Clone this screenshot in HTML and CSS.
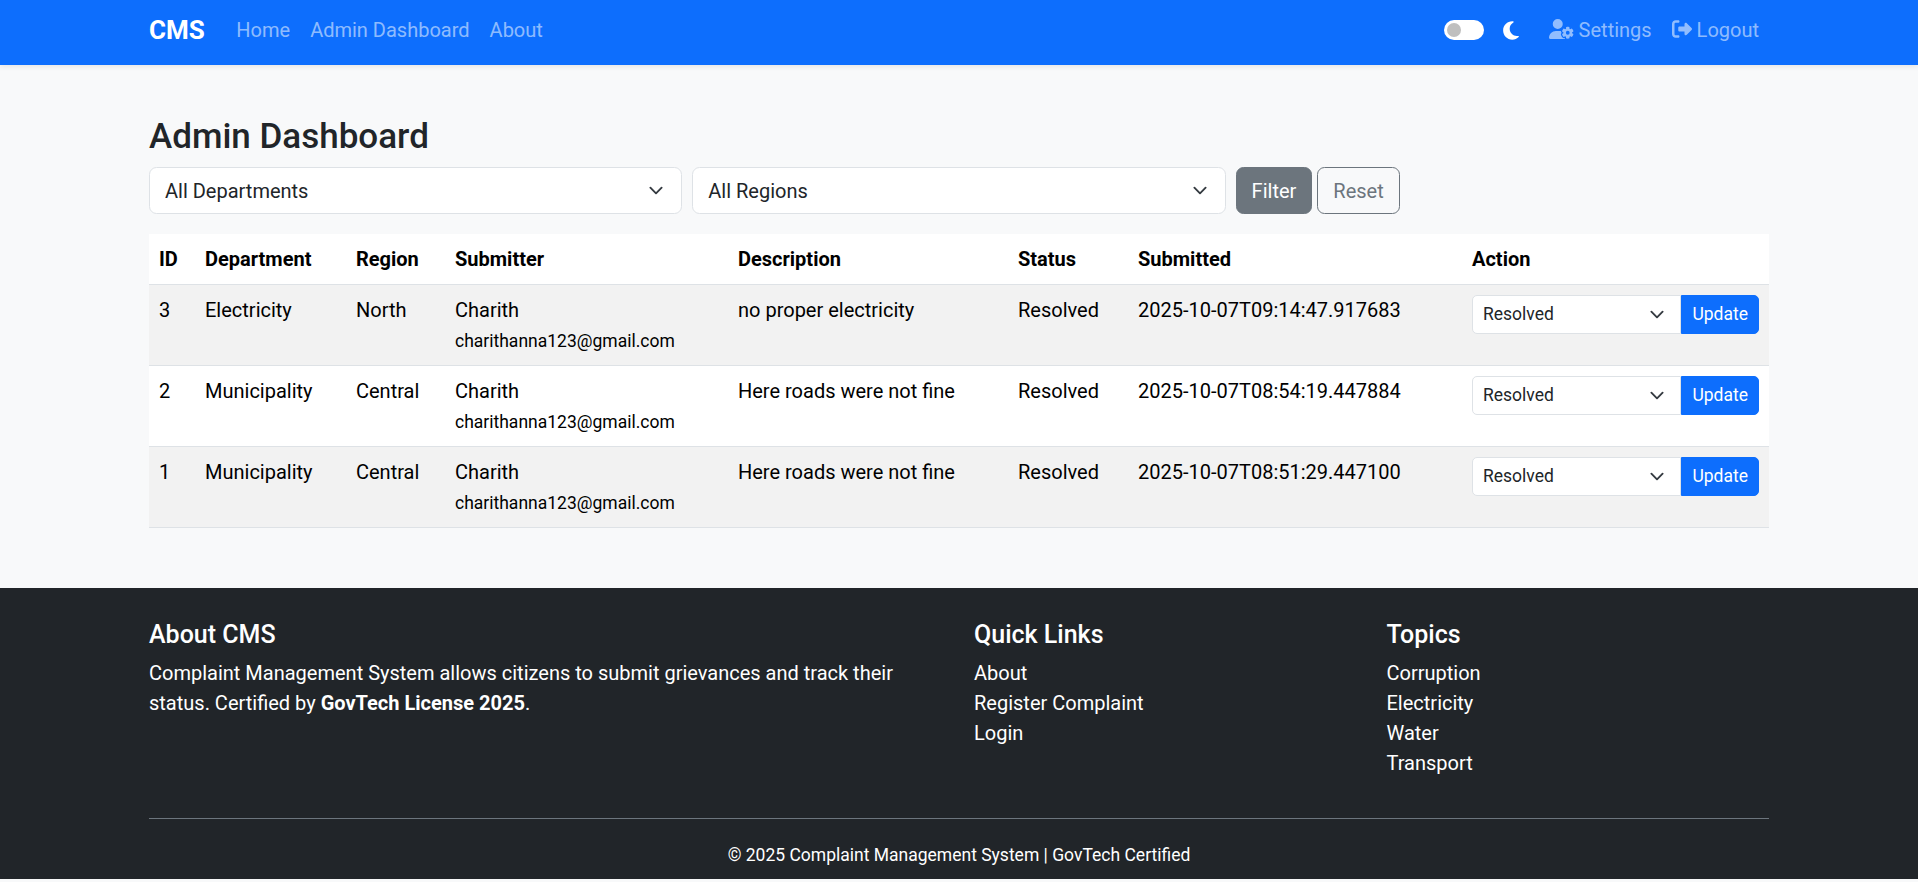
FILE: index.html
```html
<!DOCTYPE html>
<html lang="en">
<head>
    <meta charset="UTF-8">
    <meta name="viewport" content="width=device-width, initial-scale=1.0">
    <title>Admin Dashboard - CMS</title>
    <link rel="stylesheet" href="styles.css">
</head>
<body>
    <nav class="navbar">
        <div class="container nav-inner">
            <a class="brand" href="#">CMS</a>
            <a class="nav-link" href="#">Home</a>
            <a class="nav-link" href="#">Admin Dashboard</a>
            <a class="nav-link" href="#">About</a>
            <div class="nav-right">
                <span class="switch"><span class="knob"></span></span>
                <svg class="moon" viewBox="0 0 384 512"><path d="M223.5 32C100 32 0 132.3 0 256S100 480 223.5 480c60.6 0 115.5-24.2 155.8-63.4c5-4.9 6.3-12.5 3.1-18.7s-10.1-9.7-17-8.5c-9.8 1.7-19.8 2.6-30.1 2.6c-96.9 0-175.5-78.8-175.5-176c0-65.8 36-123.1 89.3-153.3c6.1-3.5 9.2-10.5 7.7-17.3s-7.3-11.9-14.3-12.5c-6.3-.5-12.6-.8-19-.8z"/></svg>
                <a class="nav-link icon-link" href="#">
                    <svg class="icon-gear" viewBox="0 0 640 512"><path d="M224 0a128 128 0 1 1 0 256A128 128 0 1 1 224 0zM178.3 304h91.4c11.8 0 23.4 1.2 34.5 3.3c-2.1 18.5 7.4 35.6 21.8 44.8c-16.6 10.6-26.7 31.6-20 53.3c4 12.9 9.4 25.5 16.4 37.6s15.2 23.1 24.4 33c15.7 16.9 39.6 18.4 57.2 8.7v.9c0 9.2 2.7 18.5 7.9 26.3H29.7C13.3 512 0 498.7 0 482.3C0 383.8 79.8 304 178.3 304zM436 218.2c0-7 4.5-13.3 11.3-14.8c10.5-2.4 21.5-3.7 32.7-3.7s22.2 1.3 32.7 3.7c6.8 1.5 11.3 7.8 11.3 14.8v30.6c7.9 3.4 15.4 7.7 22.3 12.9l24.9-14.3c6.1-3.5 13.7-2.7 18.5 2.4c7.6 8.1 14.3 17.2 20.1 27.2s10.3 20.4 13.5 31c2.1 6.7-1.1 13.7-7.2 17.2l-25 14.4c.4 4 .7 8.1 .7 12.3s-.2 8.2-.7 12.3l25 14.4c6.1 3.5 9.2 10.5 7.2 17.2c-3.3 10.6-7.8 21-13.5 31s-12.5 19.1-20.1 27.2c-4.8 5.1-12.5 5.9-18.5 2.4l-24.9-14.3c-6.9 5.1-14.3 9.4-22.3 12.9l0 30.6c0 7-4.5 13.3-11.3 14.8c-10.5 2.4-21.5 3.7-32.7 3.7s-22.2-1.3-32.7-3.7c-6.8-1.5-11.3-7.8-11.3-14.8V454.8c-8-3.4-15.6-7.7-22.5-12.9l-24.7 14.3c-6.1 3.5-13.7 2.7-18.5-2.4c-7.6-8.1-14.3-17.2-20.1-27.2s-10.3-20.4-13.5-31c-2.1-6.7 1.1-13.7 7.2-17.2l24.8-14.3c-.4-4.1-.7-8.2-.7-12.4s.2-8.3 .7-12.4L343.8 325c-6.1-3.5-9.2-10.5-7.2-17.2c3.3-10.6 7.7-21 13.5-31s12.5-19.1 20.1-27.2c4.8-5.1 12.4-5.9 18.5-2.4l24.8 14.3c6.9-5.1 14.5-9.4 22.5-12.9V218.2zm92.1 133.5a48.1 48.1 0 1 0 -96.1 0 48.1 48.1 0 1 0 96.1 0z"/></svg>
                    Settings
                </a>
                <a class="nav-link icon-link" href="#">
                    <svg class="icon-logout" viewBox="0 0 512 512"><path d="M377.9 105.9L500.7 228.7c7.2 7.2 11.3 17.1 11.3 27.3s-4.1 20.1-11.3 27.3L377.9 406.1c-6.4 6.4-15 9.9-24 9.9c-18.7 0-33.9-15.2-33.9-33.9l0-62.1-128 0c-17.7 0-32-14.3-32-32l0-64c0-17.7 14.3-32 32-32l128 0 0-62.1c0-18.7 15.2-33.9 33.9-33.9c9 0 17.6 3.6 24 9.9zM160 96L96 96c-17.7 0-32 14.3-32 32l0 256c0 17.7 14.3 32 32 32l64 0c17.7 0 32 14.3 32 32s-14.3 32-32 32l-64 0c-53 0-96-43-96-96L0 128C0 75 43 32 96 32l64 0c17.7 0 32 14.3 32 32s-14.3 32-32 32z"/></svg>
                    Logout
                </a>
            </div>
        </div>
    </nav>

    <main class="container main">
        <h3>Admin Dashboard</h3>
        <form class="filters">
            <select class="form-select">
                <option>All Departments</option>
            </select>
            <select class="form-select">
                <option>All Regions</option>
            </select>
            <div class="filter-btns">
                <button type="button" class="btn btn-filter">Filter</button>
                <button type="button" class="btn btn-reset">Reset</button>
            </div>
        </form>

        <table class="table">
            <thead>
                <tr>
                    <th class="col-id">ID</th>
                    <th class="col-dept">Department</th>
                    <th class="col-region">Region</th>
                    <th class="col-sub">Submitter</th>
                    <th class="col-desc">Description</th>
                    <th class="col-status">Status</th>
                    <th class="col-date">Submitted</th>
                    <th>Action</th>
                </tr>
            </thead>
            <tbody>
                <tr>
                    <td>3</td>
                    <td>Electricity</td>
                    <td>North</td>
                    <td>Charith<br><small>charithanna123@gmail.com</small></td>
                    <td>no proper electricity</td>
                    <td>Resolved</td>
                    <td>2025-10-07T09:14:47.917683</td>
                    <td>
                        <div class="input-group">
                            <select class="form-select-sm"><option>Resolved</option></select>
                            <button type="button" class="btn-update">Update</button>
                        </div>
                    </td>
                </tr>
                <tr>
                    <td>2</td>
                    <td>Municipality</td>
                    <td>Central</td>
                    <td>Charith<br><small>charithanna123@gmail.com</small></td>
                    <td>Here roads were not fine</td>
                    <td>Resolved</td>
                    <td>2025-10-07T08:54:19.447884</td>
                    <td>
                        <div class="input-group">
                            <select class="form-select-sm"><option>Resolved</option></select>
                            <button type="button" class="btn-update">Update</button>
                        </div>
                    </td>
                </tr>
                <tr>
                    <td>1</td>
                    <td>Municipality</td>
                    <td>Central</td>
                    <td>Charith<br><small>charithanna123@gmail.com</small></td>
                    <td>Here roads were not fine</td>
                    <td>Resolved</td>
                    <td>2025-10-07T08:51:29.447100</td>
                    <td>
                        <div class="input-group">
                            <select class="form-select-sm"><option>Resolved</option></select>
                            <button type="button" class="btn-update">Update</button>
                        </div>
                    </td>
                </tr>
            </tbody>
        </table>
    </main>

    <footer class="footer">
        <div class="container">
            <div class="footer-row">
                <div class="footer-about">
                    <h5>About CMS</h5>
                    <p>Complaint Management System allows citizens to submit grievances and track their status. Certified by <strong>GovTech License 2025</strong>.</p>
                </div>
                <div>
                    <h5>Quick Links</h5>
                    <ul>
                        <li><a href="#">About</a></li>
                        <li><a href="#">Register Complaint</a></li>
                        <li><a href="#">Login</a></li>
                    </ul>
                </div>
                <div>
                    <h5>Topics</h5>
                    <ul>
                        <li><a href="#">Corruption</a></li>
                        <li><a href="#">Electricity</a></li>
                        <li><a href="#">Water</a></li>
                        <li><a href="#">Transport</a></li>
                    </ul>
                </div>
            </div>
            <hr>
            <p class="copyright">&copy; 2025 Complaint Management System | GovTech Certified</p>
        </div>
    </footer>
</body>
</html>
```

FILE: styles.css
```css
* {
    box-sizing: border-box;
}

html, body {
    height: 882px;
    overflow: hidden;
}

body {
    margin: 0;
    font-family: Roboto, sans-serif;
    font-size: 20px;
    line-height: 1.5;
    color: #212529;
    background-color: #f8f9fa;
}

a {
    text-decoration: none;
}

.container {
    width: 1650px;
    margin: 0 auto;
    padding: 0 15px;
}

/* navbar */
.navbar {
    height: 65px;
    background-color: #0d6efd;
    box-shadow: 0 2px 5px rgba(0, 0, 0, 0.08);
}

.nav-inner {
    display: flex;
    align-items: center;
    height: 60px;
}

.brand {
    color: #fff;
    font-size: 26px;
    font-weight: 700;
    margin-right: 21.5px;
}

.nav-link {
    color: rgba(255, 255, 255, 0.55);
    padding: 10px;
}

.nav-right {
    margin-left: auto;
    display: flex;
    align-items: center;
}

.switch {
    display: block;
    width: 40px;
    height: 20px;
    border-radius: 10px;
    background-color: #fff;
    padding: 3px;
    margin-right: 19px;
}

.knob {
    display: block;
    width: 14px;
    height: 14px;
    border-radius: 50%;
    background-color: #bfbfbf;
}

.moon {
    width: 16px;
    height: 21px;
    fill: #fff;
    margin-right: 20px;
}

.icon-link svg {
    fill: rgba(255, 255, 255, 0.55);
    vertical-align: -2px;
}

.icon-gear {
    width: 25px;
    height: 20px;
}

.icon-logout {
    width: 20px;
    height: 20px;
}

/* main */
.main {
    padding-top: 51px;
}

h3 {
    font-size: 35px;
    font-weight: 500;
    line-height: 1.2;
    margin: 0 0 9px;
}

.filters {
    display: grid;
    grid-template-columns: 533.3px 533.3px 1fr;
    gap: 10px;
    margin-bottom: 20px;
}

.form-select {
    width: 100%;
    height: 47px;
    padding: 7.5px 45px 7.5px 15px;
    font-family: inherit;
    font-size: 20px;
    color: #212529;
    background: #fff url("data:image/svg+xml,%3csvg xmlns='http://www.w3.org/2000/svg' viewBox='0 0 16 16'%3e%3cpath fill='none' stroke='%23343a40' stroke-linecap='round' stroke-linejoin='round' stroke-width='2' d='m2 5 6 6 6-6'/%3e%3c/svg%3e") no-repeat right 15px center / 20px 15px;
    border: 1px solid #dee2e6;
    border-radius: 7.5px;
    appearance: none;
}

.filter-btns {
    display: flex;
    gap: 5px;
}

.btn {
    height: 47px;
    padding: 7.5px 15px;
    font-family: inherit;
    font-size: 20px;
    border-radius: 7.5px;
    border: 1px solid #6c757d;
}

.btn-filter {
    background-color: #6c757d;
    color: #fff;
}

.btn-reset {
    background-color: transparent;
    color: #6c757d;
}

/* table */
.table {
    width: 100%;
    border-collapse: collapse;
    background-color: #fff;
    color: #000;
    margin-bottom: 60px;
}

.table th, .table td {
    padding: 10px;
    text-align: left;
    vertical-align: top;
    border-bottom: 1px solid #dee2e6;
}

.table th {
    font-weight: 700;
}

.table tbody tr:nth-child(odd) {
    background-color: #f2f2f2;
}

.table small {
    font-size: 17.5px;
}

.col-id { width: 46px; }
.col-dept { width: 151px; }
.col-region { width: 99px; }
.col-sub { width: 283px; }
.col-desc { width: 280px; }
.col-status { width: 120px; }
.col-date { width: 334px; }

.input-group {
    display: flex;
}

.form-select-sm {
    flex: 1;
    min-width: 0;
    height: 38.75px;
    padding: 0 45px 0 10px;
    font-family: inherit;
    font-size: 17.5px;
    color: #212529;
    background: #fff url("data:image/svg+xml,%3csvg xmlns='http://www.w3.org/2000/svg' viewBox='0 0 16 16'%3e%3cpath fill='none' stroke='%23343a40' stroke-linecap='round' stroke-linejoin='round' stroke-width='2' d='m2 5 6 6 6-6'/%3e%3c/svg%3e") no-repeat right 13px center / 20px 15px;
    border: 1px solid #dee2e6;
    border-radius: 5px 0 0 5px;
    appearance: none;
}

.btn-update {
    height: 38.75px;
    padding: 0 10px;
    font-family: inherit;
    font-size: 17.5px;
    color: #fff;
    background-color: #0d6efd;
    border: 1px solid #0d6efd;
    border-radius: 0 5px 5px 0;
}

/* footer */
.footer {
    background-color: #212529;
    color: #fff;
    height: 291px;
    padding-top: 31.5px;
}

.footer-row {
    display: grid;
    grid-template-columns: 825px 412.5px 1fr;
}

.footer-about {
    padding-right: 30px;
}

.footer h5 {
    font-size: 25px;
    font-weight: 500;
    line-height: 1.2;
    margin: 0 0 8.5px;
}

.footer p {
    margin: 0 0 20px;
}

.footer ul {
    list-style: none;
    margin: 0;
    padding: 0;
}

.footer a {
    color: #fff;
}

.footer hr {
    border: 0;
    border-top: 1px solid #6c757d;
    margin: 40px 0 23px;
}

.footer .copyright {
    font-size: 17.5px;
    text-align: center;
    margin: 0;
}
```
